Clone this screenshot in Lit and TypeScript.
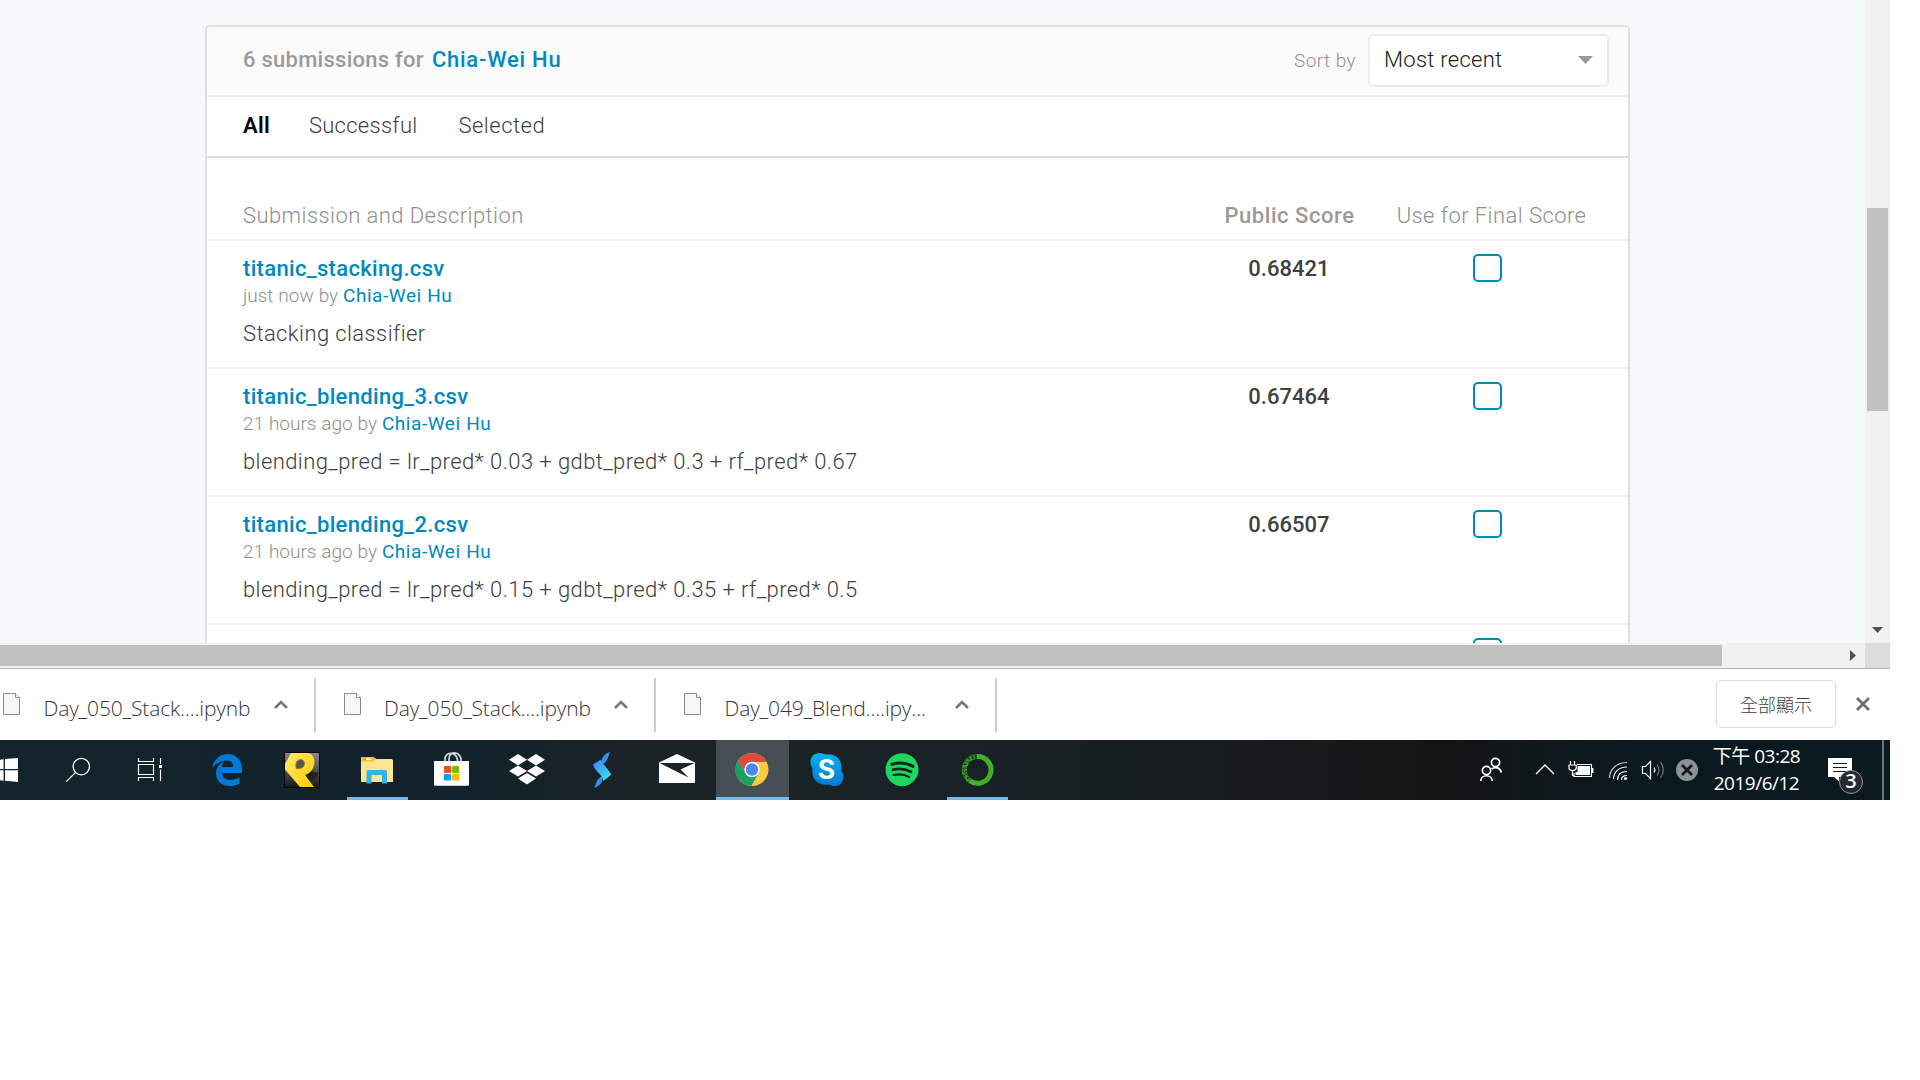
import { LitElement, html, css, svg } from "lit";
import { customElement } from "lit/decorators.js";

interface Submission { file: string; when: string; note: string; score: string; }

const rows: Submission[] = [
  { file: "titanic_stacking.csv", when: "just now by", note: "Stacking classifier", score: "0.68421" },
  { file: "titanic_blending_3.csv", when: "21 hours ago by", note: "blending_pred = lr_pred* 0.03 + gdbt_pred* 0.3 + rf_pred* 0.67", score: "0.67464" },
  { file: "titanic_blending_2.csv", when: "21 hours ago by", note: "blending_pred = lr_pred* 0.15 + gdbt_pred* 0.35 + rf_pred* 0.5", score: "0.66507" },
];

@customElement("submission-panel")
class SubmissionPanel extends LitElement {
  static styles = css`
    :host { display: block; font-family: Roboto, "Liberation Sans", sans-serif; font-weight: 300; font-size: 22px; letter-spacing: 0.4px; color: #404040; white-space: nowrap; }
    .card { border: 2px solid #dedfe0; border-radius: 5px; background: #fff; height: 700px; box-sizing: border-box; }
    .head { height: 68px; box-sizing: border-box; background: #fbfbfb; border-radius: 4px 4px 0 0; display: flex; align-items: center; padding: 0 19px 0 36px; }
    .count { font-weight: 500; color: #9a9a9a; padding-bottom: 3px; margin-right: 8px; letter-spacing: 0.26px; }
    .who { font-weight: 500; color: #008abc; padding-bottom: 3px; flex: 1; letter-spacing: 0.75px; }
    .sort { font-size: 19px; color: #8f8f8f; margin-right: 12px; padding-bottom: 1px; letter-spacing: 0.42px; }
    .select { width: 241px; height: 53px; box-sizing: border-box; border: 2px solid #ececec; border-radius: 5px; background: #fff; color: #202020; display: flex; align-items: center; justify-content: space-between; padding: 0 14px 3px; margin-bottom: 1px; letter-spacing: 0.27px; }
    .tri { width: 15px; height: 8px; display: block; margin-top: 2px; }
    .tabs { height: 63px; box-sizing: border-box; border-top: 2px solid #ececec; border-bottom: 2px solid #dedfe0; display: flex; align-items: center; padding: 0 36px 3px; }
    .tab { margin-right: 41px; letter-spacing: 0.27px; }
    .tab:last-child { letter-spacing: 0.5px; }
    .tab.on { font-weight: 600; color: #000; margin-right: 39px; }
    .thead { display: grid; grid-template-columns: 1fr 169px 233px; height: 83px; box-sizing: border-box; padding: 43px 20px 0 36px; border-bottom: 2px solid #f0f0f0; color: #8f8f8f; line-height: 30px; letter-spacing: 0.43px; }
    .mid { text-align: center; }
    .pub { font-weight: 500; color: #9a9a9a; letter-spacing: 0.55px; margin-left: -2px; }
    .row { display: grid; grid-template-columns: 1fr 169px 233px; height: 128px; box-sizing: border-box; padding: 13px 20px 0 36px; border-bottom: 2px solid #f0f0f0; }
    .file { font-weight: 500; color: #008abc; line-height: 29px; height: 28px; letter-spacing: 0.33px; }
    .meta { font-size: 19px; line-height: 28px; height: 26px; color: #8f8f8f; letter-spacing: -0.02px; word-spacing: 0.3px; }
    .link { color: #008abc; font-weight: 400; letter-spacing: 0.55px; }
    .note { margin-top: 11px; line-height: 30px; }
    .score { font-weight: 500; text-align: center; line-height: 29px; letter-spacing: 0.03px; margin-left: -3px; }
    .box { width: 29px; height: 28px; box-sizing: border-box; border: 2px solid #008abc; border-radius: 5px; margin: 0 0 0 98px; }
  `;
  render() {
    return html`<div class="card">
      <div class="head"><span class="count">6 submissions for</span><span class="who">Chia-Wei Hu</span><span class="sort">Sort by</span>
        <div class="select"><span>Most recent</span><svg class="tri" viewBox="0 0 15 8"><path d="M0 0H15L7.5 8Z" fill="#999"/></svg></div></div>
      <div class="tabs"><span class="tab on">All</span><span class="tab">Successful</span><span class="tab">Selected</span></div>
      <div class="thead"><span>Submission and Description</span><span class="mid pub">Public Score</span><span class="mid">Use for Final Score</span></div>
      ${rows.map(r => html`<div class="row"><div><div class="file">${r.file}</div><div class="meta">${r.when} <span class="link">Chia-Wei Hu</span></div><div class="note">${r.note}</div></div><div class="score">${r.score}</div><div class="box"></div></div>`)}
      <div class="row"><div></div><div></div><div class="box"></div></div>
    </div>`;
  }
}

@customElement("download-bar")
class DownloadBar extends LitElement {
  static styles = css`
    :host { display: flex; align-items: flex-start; width: 1890px; height: 72px; box-sizing: border-box; border-top: 1px solid #b2b2b2; background: #fff; padding-right: 20px; }
    .item { display: flex; align-items: center; width: 340.5px; height: 54px; margin-top: 9px; box-sizing: border-box; border-right: 2px solid #cdcdcd; padding-left: 28px; }
    .first { width: 315.5px; padding-left: 3px; }
    .name { font: 300 21px/26px "Open Sans", "Liberation Sans", sans-serif; letter-spacing: -0.16px; color: #35363a; padding-top: 6px; margin-left: 23.5px; width: 230px; white-space: nowrap; }
    .file { width: 17px; height: 22px; flex: none; margin-bottom: 2px; }
    .up { width: 14px; height: 9px; flex: none; margin-bottom: 1px; }
    .gap { flex: 1; }
    .all { width: 120px; height: 48px; box-sizing: border-box; border: 1px solid #dadce0; border-radius: 5px; margin: 11px 20px 0 0; font: 300 18px/46px "Noto Sans CJK TC", sans-serif; color: #3c4043; text-align: center; }
    .x { width: 14px; height: 14px; margin-top: 28px; }
  `;
  item(name: string, cls = "") {
    return html`<div class="item ${cls}">
      <svg class="file" viewBox="0 0 17 22"><path d="M.5.5H12.5L16.5 4.5V21.5H.5Z" fill="#f6f7f7" stroke="#8b8b8b"/><path d="M12.5.5V4.5H16.5" fill="#fff" stroke="#8b8b8b"/></svg>
      <span class="name">${name}</span>
      <svg class="up" viewBox="0 0 14 9"><path d="M1 8L7 2L13 8" fill="none" stroke="#757779" stroke-width="2.6"/></svg></div>`;
  }
  render() {
    return html`${this.item("Day_050_Stack....ipynb", "first")}${this.item("Day_050_Stack....ipynb")}${this.item("Day_049_Blend....ipy...")}
      <div class="gap"></div><div class="all">全部顯示</div>
      <svg class="x" viewBox="0 0 14 14"><path d="M1 1L13 13M13 1L1 13" stroke="#6c6e71" stroke-width="2.8"/></svg>`;
  }
}

/* Each glyph is drawn in strip coordinates: x as on the strip, y from 0 to 60. */
const apps = [
  { x: 0, w: 45, g: svg`<path d="M-6 20.5L3.6 19.3V29H-6ZM5 19.1L18 18V29H5ZM-6 30.2H3.6V40.7L-6 39.4ZM5 30.2H18V42L5 40.8Z" fill="#fff"/>` },
  { x: 45, w: 71, g: svg`<g fill="none" stroke="#fff" stroke-width="1.3"><circle cx="81.3" cy="26.6" r="8.2"/><path d="M66.3 41.6L75.6 32.4"/></g>` },
  { x: 116, w: 74, g: svg`<g fill="none" stroke="#fff" stroke-width="1.2"><path d="M138.5 18V21.5H153.5V18M138.5 24.5H153.5V34.5H138.5ZM138.5 41V37.5H153.5V41M160.5 18V24M160.5 29.5V41"/></g><rect x="159" y="25" width="3" height="3" fill="#fff"/>` },
  { x: 190, w: 75, g: svg`<path transform="translate(212 14)" d="M0 14C2 5 8 0 15.5 0C25 0 30 7 30 15V19H10C10.5 24 14.5 26 18.5 26C22 26 25 25 27.5 23.5V29.5C24 31.5 21 32 17.5 32C9.5 32 4 27 4 19.5C4 14 7 9.5 12 7.5C10.5 9 10 11 10 13H21C21 9 19.5 6.5 15 6.5C9 6.5 3.5 9.5 0 14Z" fill="#0078d7"/>` },
  { x: 265, w: 75, g: svg`<defs><linearGradient id="pg" x1="0" y1="0" x2="0" y2="1"><stop offset="0" stop-color="#8a8a8a"/><stop offset="1" stop-color="#181818"/></linearGradient><linearGradient id="py" x1="0" y1="0" x2="1" y2="1"><stop offset="0" stop-color="#fff06a"/><stop offset="1" stop-color="#ffc800"/></linearGradient></defs>
    <rect x="284.5" y="12.5" width="35" height="35" fill="url(#pg)" stroke="#060606"/><path d="M318.5 33C316 40 311 42 306 41L308 30Z" fill="#222"/><path d="M291 13H308C313 14 315.5 19 314 25C312.5 31 310 33 305 35L314 47H300L285 29.5V24Z" fill="url(#py)"/><path d="M296.5 29C294.5 23 297 19.5 301 19.5C305.5 20 305.5 26 302 28C299.5 29 298 28.5 296.5 29Z" fill="#555" stroke="#a98200" stroke-width=".8"/>` },
  { x: 340, w: 75, line: true, g: svg`<path d="M361 17H373.5L376 19H391.500Q393 19 393 20.500V42H361Z" fill="#ffe593"/><path d="M361 17H373.5L376 19L373 21.500H361Z" fill="#f5bd2f"/><rect x="364" y="18.500" width="7" height="1.600" fill="#fff"/><rect x="364" y="18.500" width="2" height="1.600" fill="#35b4e8"/><path d="M366.500 31.500Q366.500 30 368 30H385.500Q387 30 387 31.500V43.500H382V35H371.500V43.500H366.500Z" fill="#35b4e8"/>` },
  { x: 415, w: 75, g: svg`<path d="M445 22V19.500C445 11.500 455.500 11 457.500 19.500V22M449 22V19.500C449 10.500 458.500 11 461 18.500V22" fill="none" stroke="#d5d8d9" stroke-width="1.700"/><path d="M434 21H469V44.500Q469 45.700 467.500 45.700H435.500Q434 45.700 434 44.500Z" fill="#fff"/><path d="M444 26H451V33H444Z" fill="#f25022"/><path d="M452 26H459V33H452Z" fill="#7fba00"/><path d="M444 34H451V40.500H444Z" fill="#00a4ef"/><path d="M452 34H459V40.500H452Z" fill="#ffb900"/>` },
  { x: 490, w: 75, g: svg`<path d="M518 14L527 19.700L518 25.400L509 19.700ZM536 14L545 19.700L536 25.400L527 19.700ZM518 25.400L527 31L518 36.500L509 31ZM536 25.400L545 31L536 36.500L527 31ZM527 33L536 38.600L527 44.600L518 38.600Z" fill="#fff"/>` },
  { x: 565, w: 75, g: svg`<defs><linearGradient id="st" x1="0" y1="0" x2=".7" y2="1"><stop offset="0" stop-color="#4a7bf7"/><stop offset="1" stop-color="#2fe3f2"/></linearGradient></defs><path d="M609.700 12C604 14 600.500 18 602.500 24.500C607 22 608.500 17 609.700 12ZM594.500 48C601 45.500 603.500 41 602.500 36C598 38 596 42 594.500 48Z" fill="#3b8df5"/><path d="M593 24.500L601 19.500C602.500 25 608.500 29 611.300 34.500L603.500 41C603 35 594.500 31 593 24.500Z" fill="url(#st)"/>` },
  { x: 640, w: 75, g: svg`<path d="M659 22.500L677 14L695 22.500V43H659Z" fill="#fff"/><path d="M659.500 23H694.500L680.500 29.500L688.500 37.500Z" fill="#1a2428"/>` },
  { x: 715, w: 75, line: true, active: true, g: svg`<g transform="translate(752 29.500)"><circle r="16.500" fill="#ffca40"/><path d="M14.650-7.600L0-7.600L0 0L-6.580 3.800L-13.900-8.900A16.500 16.500 0 0 1 14.650-7.600Z" fill="#dd4b3e"/><path d="M-13.900-8.900L-6.580 3.800L0 0L6.580 3.800L-.750 16.500A16.500 16.500 0 0 1-13.900-8.900Z" fill="#1aa260"/><circle r="7.700" fill="#fff"/><circle r="6.200" fill="#4a87f2"/></g>` },
  { x: 790, w: 75, g: svg`<defs><linearGradient id="sk" x1="0" y1="0" x2="0" y2="1"><stop offset="0" stop-color="#00b4f0"/><stop offset="1" stop-color="#0078d4"/></linearGradient></defs><path d="M819.500 13C822 13 823.500 13.800 825 14.500C836 13 843 20 841.300 31C844.500 35 843.800 40 841 43.500C837.500 46.800 833 46.800 829.500 44.600C818 46.500 811 39 812.500 28.500C808 21 811.500 13 819.500 13Z" fill="url(#sk)"/><text x="826.500" y="39.300" text-anchor="middle" font-family="Inter, sans-serif" font-weight="700" font-size="26.500" fill="#fff">S</text>` },
  { x: 865, w: 75, g: svg`<circle cx="902" cy="29.700" r="16.500" fill="#1ed760"/><g fill="none" stroke="#14241c" stroke-linecap="round"><path d="M892 24.300C899 22.300 907 23 913 26.300" stroke-width="3.100"/><path d="M893 29.800C899 28.200 905.500 28.800 911 31.800" stroke-width="2.600"/><path d="M893.500 35C899 33.800 904.500 34.300 909 36.900" stroke-width="2.200"/></g>` },
  { x: 940, w: 75, line: true, g: svg`<g fill="none"><path d="M976.500 16.500A13.400 13.400 0 1 1 969.500 40.500" stroke="#43b02a" stroke-width="5"/><path d="M976.500 16.500A13.400 13.400 0 0 0 969.500 40.500" stroke="#2f8420" stroke-width="5"/><path d="M976.500 16.500A13.400 13.400 0 0 0 969.500 40.500" stroke="#17221c" stroke-width="3.500" stroke-dasharray="1.400 2.100"/><path d="M970 15.500L972 20L966 20L968 25L962.500 26L966.500 30L962 33L967 36L966 40L971 41" stroke="#43b02a" stroke-width="1"/></g>` },
];

const tray = [
  { x: 1472, w: 40, g: svg`<g fill="none" stroke="#fff" stroke-width="1.700"><circle cx="1495.500" cy="22.500" r="4.100"/><path d="M1491.500 29C1495 26.300 1500.500 27.500 1501.300 32.500"/><circle cx="1486.500" cy="30.500" r="4.100"/><path d="M1480.700 41C1481 34 1492 34 1492.300 41"/></g>` },
  { x: 1512, w: 49, g: svg`<path d="M1536 34L1545 25L1554 34" fill="none" stroke="#fff" stroke-width="1.400"/>` },
  { x: 1561, w: 40, g: svg`<path d="M1577 24.500H1591.500V36.500H1574V33" fill="none" stroke="#fff" stroke-width="1.100"/><path d="M1577.500 26H1590V35H1575.500V32H1577.500Z" fill="#fff"/><rect x="1592" y="28" width="1.400" height="5" fill="#fff"/><path d="M1570.500 21V25M1574.500 21V25M1569 25H1576.200V28.500Q1575.500 30.500 1572.500 30.500Q1569.500 30.500 1569 28.500ZM1572.500 30.500V35.500H1574" fill="none" stroke="#fff" stroke-width="1.200"/>` },
  { x: 1601, w: 34, g: svg`<g fill="none" stroke="#fff" stroke-width="1.200"><path d="M1627 22.500C1616 22.500 1609.500 30 1609.500 38" opacity=".75"/><path d="M1627 27C1619 27 1613.500 32 1613.500 39"/><path d="M1627 31.500C1621 31.500 1617.500 34.500 1617.500 40"/><path d="M1627 35.500C1623.500 35.500 1621.500 37 1621.500 40"/></g><circle cx="1625.500" cy="38.500" r="1.600" fill="#fff"/>` },
  { x: 1635, w: 36, g: svg`<g fill="none" stroke="#fff" stroke-width="1.200"><path d="M1642.500 26.500H1645.500L1650.500 21.500V38.500L1645.500 33.500H1642.500Z"/><path d="M1654 27.500Q1655.800 30 1654 32.500"/><path d="M1657 24.500Q1661 30 1657 35.500M1660.500 21.800Q1666 30 1660.500 38.200" opacity=".4"/></g>` },
  { x: 1671, w: 33, g: svg`<circle cx="1687" cy="30" r="11" fill="#8d9295"/><path d="M1682 25L1692 35M1692 25L1682 35" stroke="#14191c" stroke-width="2.800"/>` },
];

@customElement("task-bar")
class TaskBar extends LitElement {
  static styles = css`
    :host { display: flex; width: 1890px; height: 60px; background: linear-gradient(90deg, #13242c 0, #12222a 490px, #1b2326 640px, #182226 1000px, #171b1d 1250px, #141414 1430px, #0a1920 1640px, #0a1920 100%); color: #fff; overflow: hidden; }
    .cell { position: relative; flex: none; height: 60px; }
    .active { background: linear-gradient(90deg, transparent 1px, #465054 1px, #465054 74px, transparent 74px); }
    .cell svg { display: block; height: 60px; }
    .line::after { content: ""; position: absolute; left: 7px; right: 7px; bottom: 0; height: 3px; background: #76b9ed; }
    .active.line::after { left: 1px; right: 1px; }
    .gap { flex: 1; }
    .clock { flex: none; width: 105px; text-align: center; font: 400 19px/27px "Open Sans", "Noto Sans CJK TC", sans-serif; letter-spacing: -0.5px; padding-top: 3px; white-space: nowrap; }
    .note { flex: none; position: relative; width: 73px; height: 60px; }
    .note svg { display: block; margin-left: 1px; }
    .badge { position: absolute; left: 30px; top: 30px; width: 24px; height: 24px; box-sizing: border-box; border: 1px solid #8f9496; border-radius: 50%; background: #26292b; font: 600 20px/20px "Open Sans", sans-serif; text-align: center; }
    .edge { flex: none; width: 6px; border-left: 2px solid #6d777b; }
  `;
  cell(c: { x: number; w: number; g: unknown; line?: boolean; active?: boolean }) {
    return html`<div class="cell ${c.line ? "line" : ""} ${c.active ? "active" : ""}"><svg width=${c.w} height="60" viewBox="${c.x} 0 ${c.w} 60">${c.g}</svg></div>`;
  }
  render() {
    return html`${apps.map(a => this.cell(a))}<div class="gap"></div>${tray.map(t => this.cell(t))}
      <div class="clock"><div>下午 03:28</div><div>2019/6/12</div></div>
      <div class="note"><svg width="60" height="60" viewBox="1810 0 60 60"><path d="M1828 18H1852V37H1839V41.500L1834 37H1828Z" fill="#fff"/><path d="M1833 23.500H1847M1833 27.500H1847M1833 31.500H1847" stroke="#14191c" stroke-width="1.100"/></svg><span class="badge">3</span></div>
      <div class="edge"></div>`;
  }
}

@customElement("app-root")
class AppRoot extends LitElement {
  static styles = css`
    :host { display: block; width: 1920px; height: 1080px; background: #fff; overflow: hidden; }
    .window { width: 1890px; }
    .top { display: flex; height: 643px; }
    .view { width: 1865px; height: 643px; background: #f5f9fa; overflow: hidden; box-sizing: border-box; padding: 25px 235px 0 205px; }
    .vbar { width: 25px; background: #f1f1f1; display: flex; flex-direction: column; align-items: center; box-sizing: border-box; padding: 208px 0 10px; }
    .vthumb { width: 21px; height: 203px; background: #c1c1c1; }
    .down { width: 11px; height: 6px; margin-top: auto; }
    .hbar { display: flex; height: 25px; background: #f1f1f1; align-items: center; }
    .hthumb { width: 1722px; height: 21px; background: #c1c1c1; }
    .right { width: 6px; height: 11px; margin-left: 128px; }
    .corner { width: 25px; height: 25px; margin-left: auto; background: #dcdcdc; }
  `;
  render() {
    return html`<div class="window">
      <div class="top"><div class="view"><submission-panel></submission-panel></div>
        <div class="vbar"><div class="vthumb"></div><svg class="down" viewBox="0 0 11 6"><path d="M0 0H11L5.500 6Z" fill="#505050"/></svg></div></div>
      <div class="hbar"><div class="hthumb"></div><svg class="right" viewBox="0 0 6 11"><path d="M0 0V11L6 5.500Z" fill="#505050"/></svg><div class="corner"></div></div>
      <download-bar></download-bar>
      <task-bar></task-bar>
    </div>`;
  }
}
